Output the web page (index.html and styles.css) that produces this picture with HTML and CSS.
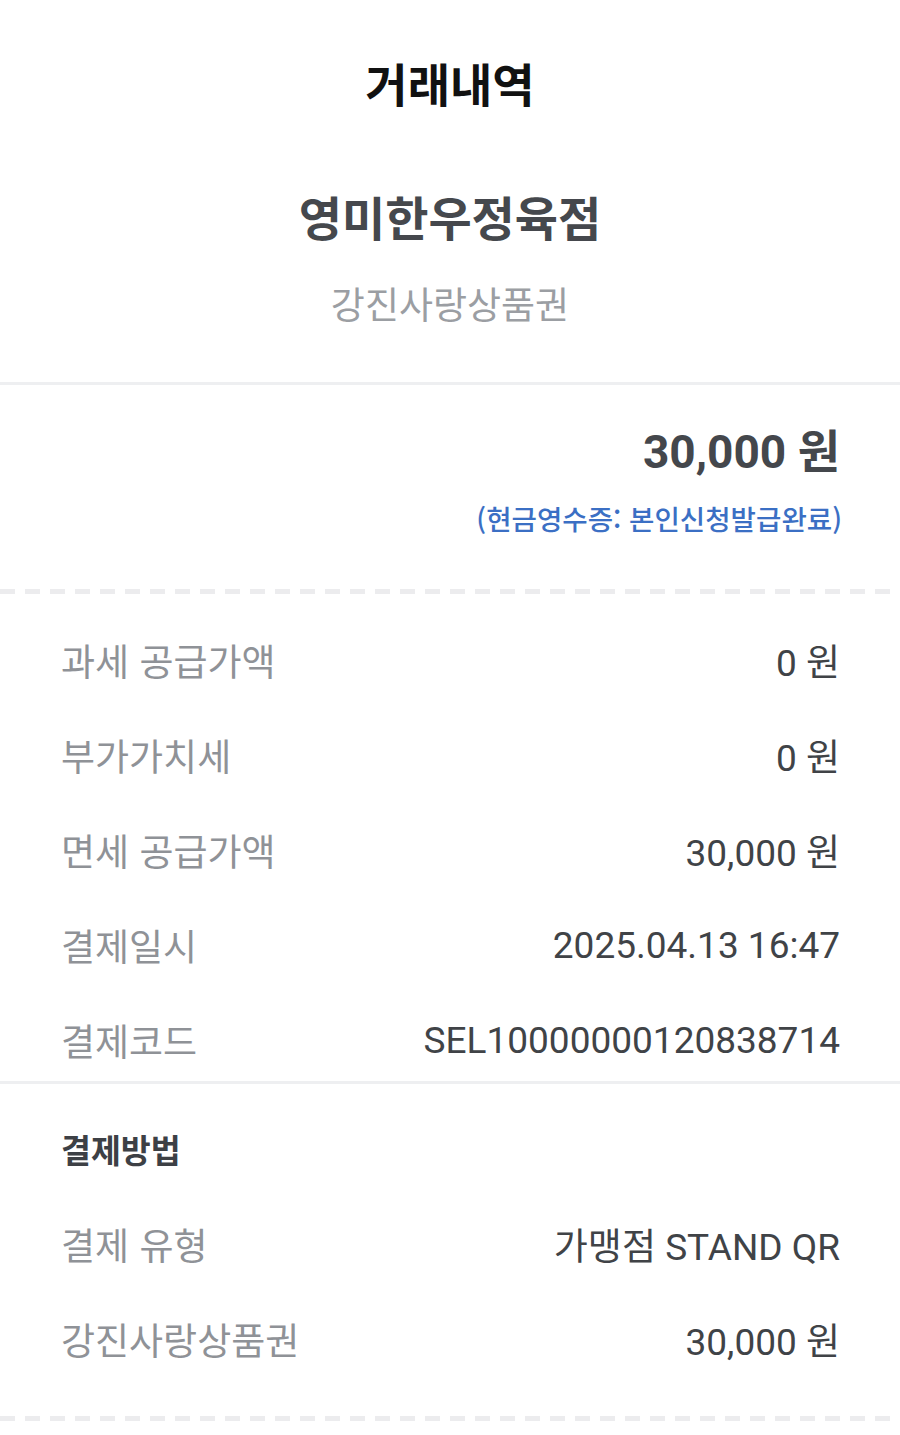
FILE: index.html
```html
<!DOCTYPE html>
<html lang="ko">
<head>
  <meta charset="UTF-8">
  <meta name="viewport" content="width=device-width, initial-scale=1.0">
  <title>거래내역</title>
  <link rel="stylesheet" href="styles.css">
</head>
<body>
  <header class="top">
    <h1 class="title">거래내역</h1>
    <div class="store">영미한우정육점</div>
    <div class="voucher">강진사랑상품권</div>
  </header>

  <div class="line"></div>

  <section class="amount">
    <div class="total">30,000 원</div>
    <div class="receipt">(현금영수증: 본인신청발급완료)</div>
  </section>

  <div class="dashed"></div>

  <section class="rows">
    <div class="row"><span class="label">과세 공급가액</span><span class="value">0 원</span></div>
    <div class="row"><span class="label">부가가치세</span><span class="value">0 원</span></div>
    <div class="row"><span class="label">면세 공급가액</span><span class="value">30,000 원</span></div>
    <div class="row"><span class="label">결제일시</span><span class="value">2025.04.13 16:47</span></div>
    <div class="row"><span class="label">결제코드</span><span class="value">SEL10000000120838714</span></div>
  </section>

  <div class="line"></div>

  <section class="rows method">
    <h2 class="section-title">결제방법</h2>
    <div class="row"><span class="label">결제 유형</span><span class="value">가맹점 STAND QR</span></div>
    <div class="row"><span class="label">강진사랑상품권</span><span class="value">30,000 원</span></div>
  </section>

  <div class="dashed"></div>
</body>
</html>
```

FILE: styles.css
```css
body {
  margin: 0;
  background: #fff;
  font-family: Roboto, "Noto Sans CJK KR", sans-serif;
  color: #404347;
}

.top {
  display: flex;
  flex-direction: column;
  align-items: center;
  padding: 52px 0 54px;
  font-family: "Noto Sans CJK KR", sans-serif;
}

.title {
  margin: 0;
  font-size: 46px;
  font-weight: 700;
  line-height: 60px;
  color: #111;
}

.store {
  margin-top: 74px;
  font-size: 47px;
  font-weight: 700;
  line-height: 60px;
  color: #45484d;
}

.voucher {
  margin-top: 32px;
  font-size: 37px;
  line-height: 50px;
  color: #9b9ea3;
}

.line {
  height: 3px;
  background: #eeeff1;
}

.dashed {
  height: 5px;
  background: repeating-linear-gradient(90deg, #ececee 0 15px, transparent 15px 25px);
}

.amount {
  display: flex;
  flex-direction: column;
  align-items: flex-end;
  padding: 37px 60px 51px;
}

.total {
  font-size: 46px;
  font-weight: 700;
  line-height: 60px;
  color: #44474c;
}

.receipt {
  margin-top: 16px;
  margin-right: -2px;
  font-family: "Noto Sans CJK KR", sans-serif;
  font-size: 27.6px;
  font-weight: 500;
  line-height: 40px;
  color: #3b6fc4;
}

.rows {
  display: flex;
  flex-direction: column;
  gap: 35px;
  padding: 36px 60px 11px 61px;
}

.method {
  padding: 35px 60px 47px 61px;
}

.section-title {
  margin: 0;
  font-family: "Noto Sans CJK KR", sans-serif;
  font-size: 32.5px;
  font-weight: 700;
  line-height: 60px;
  color: #3d4045;
}

.row {
  display: flex;
  justify-content: space-between;
  align-items: center;
  height: 60px;
}

.label {
  font-family: "Noto Sans CJK KR", sans-serif;
  font-size: 37px;
  color: #8f9297;
}

.value {
  font-size: 37px;
  color: #404347;
}
```
